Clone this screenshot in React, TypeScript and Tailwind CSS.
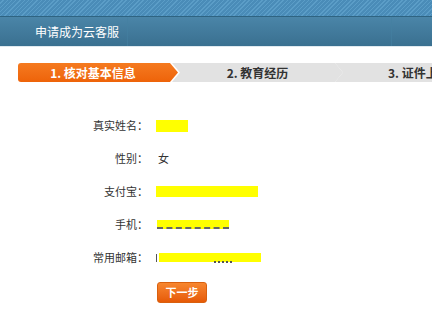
import React from 'react';

const font = { fontFamily: '"Noto Sans CJK SC", "Noto Sans", sans-serif' };

const Row: React.FC<{ label: string; children: React.ReactNode }> = ({ label, children }) => (
    <div className="flex items-center h-[33px]">
        <div className="w-[148px] text-right text-[11px] text-[#333]">{label}</div>
        <div className="ml-[8px] flex items-center text-[11px] text-[#333]">{children}</div>
    </div>
);

export default function App() {
    return (
        <div className="w-[432px] h-[319px] bg-white overflow-hidden" style={font}>
            {/* Header */}
            <div className="h-[16px] bg-[#4b8fbb] bg-[image:repeating-linear-gradient(135deg,#4a8cb8_0px,#4a8cb8_2px,#5b9dc7_2px,#5b9dc7_3px)]" />
            <div className="h-[30px] bg-gradient-to-b from-[#4a85a8] to-[#3a7090] border-t border-[#2f6482] flex items-center pl-[35px] relative">
                <span className="text-white text-[12px]">申请成为云客服</span>
                <div className="absolute left-[127px] top-0 bottom-0 w-px bg-[#4580a2]/60" />
                <div className="absolute left-[391px] top-0 bottom-0 w-px bg-[#4580a2]/60" />
            </div>
            <div className="h-px bg-[#dfe9ef]" />

            {/* Steps */}
            <div className="flex h-[19px] mt-[16px] pl-[18px]">
                <div className="w-[160px] shrink-0 bg-gradient-to-b from-[#f57a1f] to-[#ee6308] rounded-l-[3px] [clip-path:polygon(0_0,152px_0,100%_50%,152px_100%,0_100%)] flex items-center justify-center pr-[10px] text-white text-[12px] font-bold z-10">
                    1. 核对基本信息
                </div>
                <div className="w-[171px] shrink-0 -ml-[6px] bg-[#e2e2e2] [clip-path:polygon(0_0,163px_0,100%_50%,163px_100%,0_100%,8px_50%)] flex items-center justify-center text-[#333] text-[12px] font-bold">
                    2. 教育经历
                </div>
                <div className="w-[120px] shrink-0 -ml-[8px] bg-[#e2e2e2] [clip-path:polygon(0_0,100%_0,100%_100%,0_100%,8px_50%)] flex items-center pl-[53px] text-[#333] text-[12px] font-bold whitespace-nowrap">
                    3. 证件上传
                </div>
            </div>

            {/* Form */}
            <div className="mt-[27px]">
                <Row label="真实姓名：">
                    <div className="w-[32px] h-[12px] bg-[#ffff00]" />
                </Row>
                <Row label="性别：">
                    <span className="ml-[2px]">女</span>
                </Row>
                <Row label="支付宝：">
                    <div className="w-[102px] h-[11px] bg-[#ffff00]" />
                </Row>
                <Row label="手机：">
                    <div className="w-[72px] h-[9px] bg-[#ffff00] border-b-2 border-dashed border-[#666] ml-[1px]" />
                </Row>
                <Row label="常用邮箱：">
                    <div className="flex items-center">
                        <div className="w-px h-[8px] bg-[#555] mr-[2px]" />
                        <div className="w-[102px] h-[9px] bg-[#ffff00] relative">
                            <div className="absolute left-[55px] top-[8px] w-[18px] border-b-2 border-dotted border-[#555]" />
                        </div>
                    </div>
                </Row>
            </div>

            <div className="pl-[157px] mt-[8px]">
                <button className="w-[50px] h-[21px] rounded-[3px] bg-gradient-to-b from-[#f7862e] to-[#e65a05] border border-[#d9600f] text-white text-[11px] font-bold flex items-center justify-center">
                    下一步
                </button>
            </div>
        </div>
    );
}
